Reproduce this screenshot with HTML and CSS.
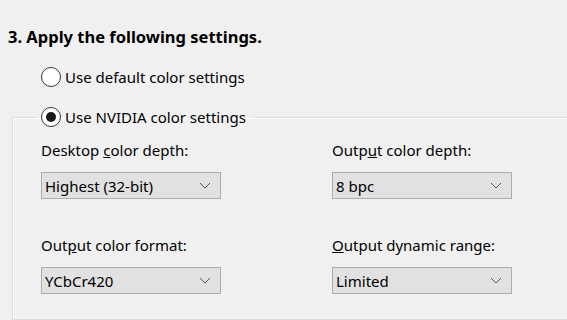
FILE: index.html
```html
<!DOCTYPE html>
<html lang="en">
<head>
    <meta charset="UTF-8">
    <title>Adjust desktop color settings</title>
    <link rel="stylesheet" href="styles.css">
</head>
<body>
    <div class="page">
        <h1>3. Apply the following settings.</h1>

        <label class="radio radio-top">
            <input type="radio" name="mode">
            <span>Use default color settings</span>
        </label>

        <fieldset class="group">
            <legend>
                <label class="radio">
                    <input type="radio" name="mode" checked>
                    <span>Use NVIDIA color settings</span>
                </label>
            </legend>

            <div class="grid">
                <div class="field">
                    <div class="field-label">Desktop <u>c</u>olor depth:</div>
                    <div class="select">
                        <span>Highest (32-bit)</span>
                        <svg width="12" height="7" viewBox="0 0 12 7"><path d="M1 1 L6 6 L11 1" fill="none" stroke="#555" stroke-width="1"/></svg>
                    </div>
                </div>
                <div class="field">
                    <div class="field-label">Outp<u>u</u>t color depth:</div>
                    <div class="select">
                        <span>8 bpc</span>
                        <svg width="12" height="7" viewBox="0 0 12 7"><path d="M1 1 L6 6 L11 1" fill="none" stroke="#555" stroke-width="1"/></svg>
                    </div>
                </div>
                <div class="field">
                    <div class="field-label">Out<u>p</u>ut color format:</div>
                    <div class="select">
                        <span>YCbCr420</span>
                        <svg width="12" height="7" viewBox="0 0 12 7"><path d="M1 1 L6 6 L11 1" fill="none" stroke="#555" stroke-width="1"/></svg>
                    </div>
                </div>
                <div class="field">
                    <div class="field-label"><u>O</u>utput dynamic range:</div>
                    <div class="select">
                        <span>Limited</span>
                        <svg width="12" height="7" viewBox="0 0 12 7"><path d="M1 1 L6 6 L11 1" fill="none" stroke="#555" stroke-width="1"/></svg>
                    </div>
                </div>
            </div>
        </fieldset>
    </div>
</body>
</html>
```

FILE: styles.css
```css
body {
    margin: 0;
    background-color: #f0f0f0;
    font-family: "Noto Sans", "Open Sans", sans-serif;
    font-size: 15px;
    color: #000;
    overflow: hidden;
}
.page {
    padding: 26px 0 0 8px;
}
h1 {
    margin: 0;
    font-size: 16.5px;
    font-weight: bold;
    line-height: 21px;
}
.radio {
    display: flex;
    align-items: center;
    gap: 4px;
    line-height: 20px;
}
.radio-top {
    margin: 20px 0 0 33px;
}
.radio input {
    appearance: none;
    margin: 0;
    width: 20px;
    height: 20px;
    border: 1px solid #333;
    border-radius: 50%;
    background-color: #fff;
    display: grid;
    place-items: center;
}
.radio input:checked::after {
    content: "";
    width: 10px;
    height: 10px;
    border-radius: 50%;
    background-color: #1a1a1a;
}
.group {
    box-sizing: border-box;
    margin: 20px -20px 0 4px;
    padding: 0 0 0 28px;
    border: 1px solid #dcdcdc;
    box-shadow: inset 1px 1px 0 #fff;
    height: 213px;
}
.group legend {
    padding: 0 8px 0 4px;
    margin-left: -4px;
}
.grid {
    display: grid;
    grid-template-columns: 291px 1fr;
    row-gap: 36px;
    padding-top: 13px;
}
.field-label {
    line-height: 20px;
    margin-bottom: 12px;
}
.select {
    box-sizing: border-box;
    width: 180px;
    height: 27px;
    border: 1px solid #adadad;
    background-color: #e1e1e1;
    display: flex;
    align-items: center;
    justify-content: space-between;
    padding: 0 9px 0 3px;
}
```
